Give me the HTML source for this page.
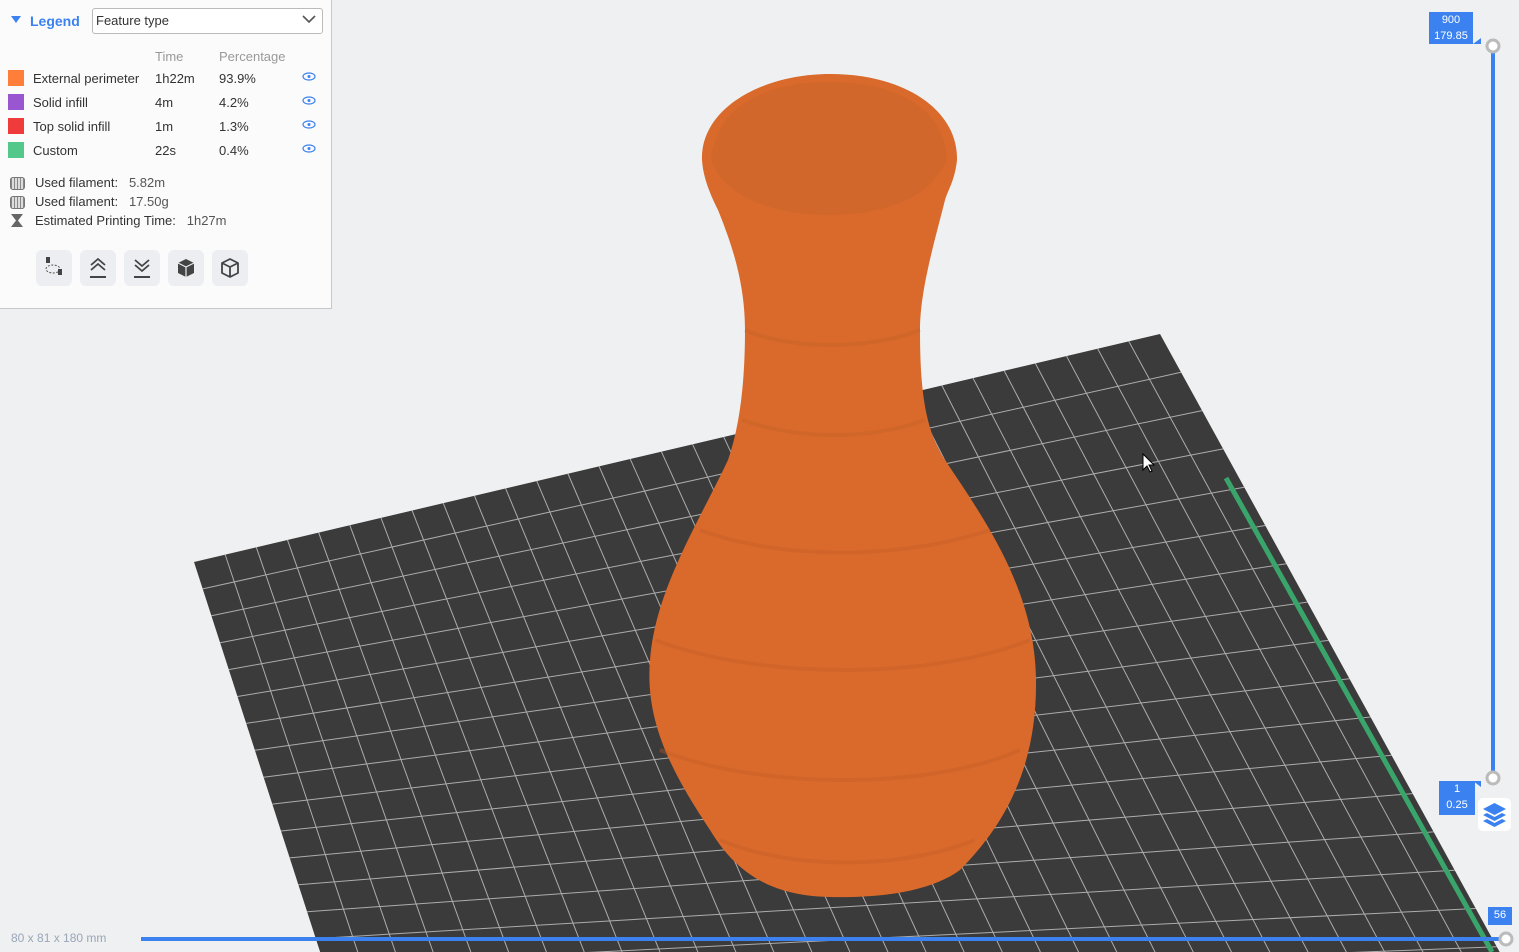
<!DOCTYPE html>
<html><head><meta charset="utf-8"><style>
html,body{margin:0;padding:0;width:1519px;height:952px;overflow:hidden;background:#eff0f1;font-family:"Liberation Sans",sans-serif}
svg.scene{position:absolute;left:0;top:0;overflow:hidden}
.panel{position:absolute;left:0;top:0;width:331px;height:308px;background:#fbfbfc;border-right:1px solid #c8c8c8;border-bottom:1px solid #c8c8c8;font-size:13px;color:#333}
.panel .t{position:absolute;white-space:nowrap}
.sw{position:absolute;left:8px;width:16px;height:16px}
.eye{position:absolute;left:302px;width:14px;height:9px}
.btn{position:absolute;top:250px;width:36px;height:36px;background:#eceef2;border-radius:6px}
.lbl{position:absolute;background:#3b82f0;color:#fff;font-size:11px;text-align:center;line-height:16px}
</style></head><body>
<svg class="scene" width="1519" height="952" id="sc">
<polygon points="194,562 1160,334 1581,1100 368,1100" fill="#3b3b3b"/>
<g id="grid" stroke="#c9c9c9" stroke-width="1" opacity="0.8"></g>
<line x1="1226" y1="478" x2="1492" y2="952" stroke="#3aa56b" stroke-width="5"/>
<path d="M702,160 C700,110 760,74 830,74 C905,74 958,110 957,160 C955,180 948,190 945,200 C935,240 920,290 920,330 C920,390 925,430 945,460 C985,520 1035,590 1036,680 C1037,760 1010,820 960,870 C930,892 880,898 830,897 C780,896 740,880 710,830 C670,770 645,720 650,660 C655,590 700,520 728,460 C742,420 745,370 745,330 C745,280 730,240 718,210 C708,190 703,175 702,160 Z" fill="#d96a2c"/>
<path d="M711,160 C715,110 760,82 829,82 C900,82 945,110 947,160 C930,200 880,215 829,215 C780,215 725,200 711,160Z" fill="#d1672b"/>
<g stroke="#c45e26" stroke-width="4" fill="none" opacity="0.35">
<path d="M745,330 C790,350 870,350 920,330"/><path d="M742,420 C800,440 870,440 925,420"/><path d="M700,530 C780,560 900,560 990,530"/><path d="M655,640 C760,680 930,680 1030,640"/><path d="M660,750 C760,790 930,790 1020,750"/><path d="M720,840 C790,870 900,870 975,840"/>
</g>
<path d="M1143,454 l0,16 l4,-4 l3,6 l2,-1 l-3,-6 l5,0 z" fill="#fff" stroke="#000" stroke-width="1"/>
<line x1="1493" y1="46" x2="1493" y2="778" stroke="#3b82f0" stroke-width="4"/>
<line x1="141" y1="939" x2="1506" y2="939" stroke="#3b82f0" stroke-width="4"/>
<circle cx="1493" cy="46" r="6" fill="#fff" stroke="#bbb" stroke-width="3"/>
<circle cx="1493" cy="778" r="6" fill="#fff" stroke="#bbb" stroke-width="3"/>
<circle cx="1506" cy="939" r="6" fill="#fff" stroke="#bbb" stroke-width="3"/>
<polygon points="1473,44 1481,44 1481,38" fill="#3b82f0"/>
<polygon points="1473,781 1481,781 1481,787" fill="#3b82f0"/>
</svg>
<div class="lbl" style="left:1429px;top:12px;width:44px;height:32px">900<br>179.85</div>
<div class="lbl" style="left:1439px;top:781px;width:36px;height:34px">1<br>0.25</div>
<div class="lbl" style="left:1488px;top:907px;width:24px;height:18px">56</div>
<div style="position:absolute;left:1478px;top:798px;width:33px;height:33px;background:#fff;border-radius:5px">
<svg width="33" height="33"><g fill="#3b82f0"><path d="M5,11 L16.5,5 L28,11 L16.5,17Z"/><path d="M5,17 L9,15 L16.5,19 L24,15 L28,17 L16.5,23Z"/><path d="M5,23 L9,21 L16.5,25 L24,21 L28,23 L16.5,29Z"/></g></svg></div>
<div style="position:absolute;left:11px;top:931px;font-size:12px;color:#9aa6b8">80 x 81 x 180 mm</div>

<div class="panel">
<svg style="position:absolute;left:11px;top:16px" width="10" height="8"><path d="M0,0 L10,0 L5,7Z" fill="#3b82f0"/></svg>
<div class="t" style="left:30px;top:13px;font-size:14px;color:#3b82f0;font-weight:bold">Legend</div>
<div style="position:absolute;left:92px;top:8px;width:229px;height:24px;border:1px solid #bbb;border-radius:3px;background:#fff"></div>
<div class="t" style="left:96px;top:13px">Feature type</div>
<svg style="position:absolute;left:302px;top:15px" width="14" height="9"><path d="M1,1 L7,7 L13,1" stroke="#555" stroke-width="1.6" fill="none"/></svg>
<div class="t" style="left:155px;top:49px;color:#999">Time</div>
<div class="t" style="left:219px;top:49px;color:#999">Percentage</div>
<div class="sw" style="top:70px;background:#ff7f3a"></div><div class="t" style="left:33px;top:71px">External perimeter</div><div class="t" style="left:155px;top:71px">1h22m</div><div class="t" style="left:219px;top:71px">93.9%</div>
<div class="sw" style="top:94px;background:#9a55d1"></div><div class="t" style="left:33px;top:95px">Solid infill</div><div class="t" style="left:155px;top:95px">4m</div><div class="t" style="left:219px;top:95px">4.2%</div>
<div class="sw" style="top:118px;background:#ef3b3b"></div><div class="t" style="left:33px;top:119px">Top solid infill</div><div class="t" style="left:155px;top:119px">1m</div><div class="t" style="left:219px;top:119px">1.3%</div>
<div class="sw" style="top:142px;background:#52c88a"></div><div class="t" style="left:33px;top:143px">Custom</div><div class="t" style="left:155px;top:143px">22s</div><div class="t" style="left:219px;top:143px">0.4%</div>
<svg class="eye" style="top:72px"><ellipse cx="7" cy="4.5" rx="6" ry="3.5" fill="none" stroke="#3b82f0" stroke-width="1.2"/><circle cx="7" cy="4.5" r="1.5" fill="#3b82f0"/></svg>
<svg class="eye" style="top:96px"><ellipse cx="7" cy="4.5" rx="6" ry="3.5" fill="none" stroke="#3b82f0" stroke-width="1.2"/><circle cx="7" cy="4.5" r="1.5" fill="#3b82f0"/></svg>
<svg class="eye" style="top:120px"><ellipse cx="7" cy="4.5" rx="6" ry="3.5" fill="none" stroke="#3b82f0" stroke-width="1.2"/><circle cx="7" cy="4.5" r="1.5" fill="#3b82f0"/></svg>
<svg class="eye" style="top:144px"><ellipse cx="7" cy="4.5" rx="6" ry="3.5" fill="none" stroke="#3b82f0" stroke-width="1.2"/><circle cx="7" cy="4.5" r="1.5" fill="#3b82f0"/></svg>
<div style="position:absolute;left:10px;top:177px;width:13px;height:11px;border:1px solid #777;border-radius:3px;background:repeating-linear-gradient(90deg,#888 0 1px,#ddd 1px 3px)"></div>
<div style="position:absolute;left:10px;top:196px;width:13px;height:11px;border:1px solid #777;border-radius:3px;background:repeating-linear-gradient(90deg,#888 0 1px,#ddd 1px 3px)"></div>
<svg style="position:absolute;left:10px;top:213px" width="14" height="15"><path d="M1,1 H13 L8,7.5 L13,14 H1 L6,7.5Z" fill="#666"/></svg>
<div class="t" style="left:35px;top:175px">Used filament:&nbsp;&nbsp; <span style="color:#555">5.82m</span></div>
<div class="t" style="left:35px;top:194px">Used filament:&nbsp;&nbsp; <span style="color:#555">17.50g</span></div>
<div class="t" style="left:35px;top:213px">Estimated Printing Time:&nbsp;&nbsp; <span style="color:#555">1h27m</span></div>
<div class="btn" style="left:36px"><svg width="36" height="36"><rect x="10" y="7" width="4" height="6" fill="#444"/><ellipse cx="17" cy="19" rx="7" ry="4" fill="none" stroke="#555" stroke-dasharray="2 1.5"/><rect x="22" y="19" width="4" height="6" fill="#444"/></svg></div>
<div class="btn" style="left:80px"><svg width="36" height="36"><path d="M11,15 L18,9 L25,15 M11,20 L18,14 L25,20" stroke="#444" stroke-width="1.8" fill="none"/><line x1="10" y1="27" x2="26" y2="27" stroke="#444" stroke-width="2"/></svg></div>
<div class="btn" style="left:124px"><svg width="36" height="36"><path d="M11,10 L18,16 L25,10 M11,15 L18,21 L25,15" stroke="#444" stroke-width="1.8" fill="none"/><line x1="10" y1="27" x2="26" y2="27" stroke="#444" stroke-width="2"/></svg></div>
<div class="btn" style="left:168px"><svg width="36" height="36"><path d="M18,9 L26,13 L26,23 L18,27 L10,23 L10,13Z" fill="#444"/><path d="M10,13 L18,17 L26,13 M18,17 V27" stroke="#eceef2" stroke-width="1.2" fill="none"/></svg></div>
<div class="btn" style="left:212px"><svg width="36" height="36"><path d="M18,9 L26,13 L26,23 L18,27 L10,23 L10,13Z M10,13 L18,17 L26,13 M18,17 V27" stroke="#444" stroke-width="1.8" fill="none" stroke-linejoin="round"/></svg></div>
</div>
<script>
(function(){var A=[194,562],B=[1160,334],C=[1581,1100],D=[368,1100];
function P(u,v){return[(1-u)*(1-v)*A[0]+u*(1-v)*B[0]+u*v*C[0]+(1-u)*v*D[0],(1-u)*(1-v)*A[1]+u*(1-v)*B[1]+u*v*C[1]+(1-u)*v*D[1]];}
var g=document.getElementById('grid'),s='',N=31,M=20;
for(var i=1;i<N;i++){var p=P(i/N,0),q=P(i/N,1);s+='<line x1="'+p[0]+'" y1="'+p[1]+'" x2="'+q[0]+'" y2="'+q[1]+'"/>';}
for(var j=1;j<M;j++){var p=P(0,j/M),q=P(1,j/M);s+='<line x1="'+p[0]+'" y1="'+p[1]+'" x2="'+q[0]+'" y2="'+q[1]+'"/>';}
g.innerHTML=s;})();
</script>
</body></html>
